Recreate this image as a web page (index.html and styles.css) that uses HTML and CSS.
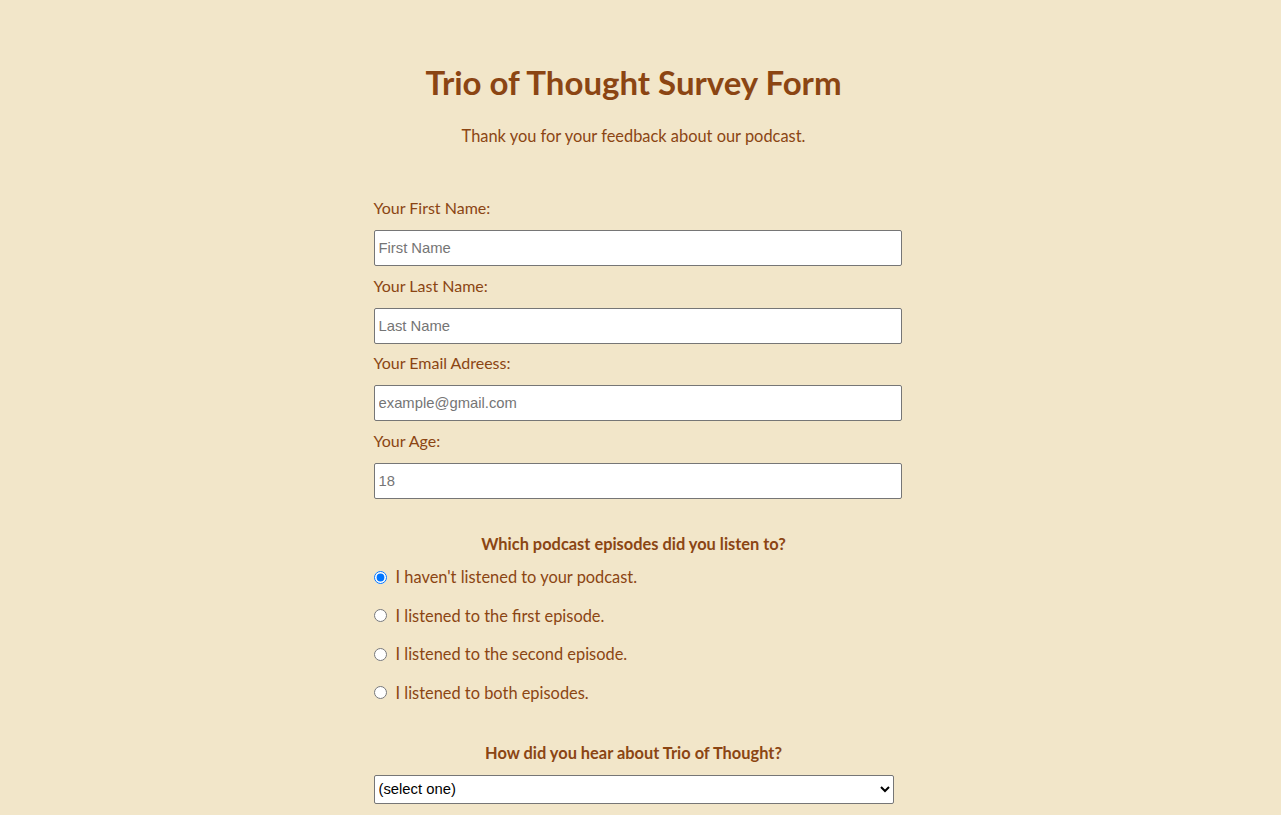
FILE: index.html
```
<!DOCTYPE html>
<html lang="en">
<head>
<meta charset="utf-8">
<title>Trio of Thought Survey Form</title>
<link rel="stylesheet" href="styles.css">
</head>
<body>
<header class="header">
  <h1 class="title" id="title">Trio of Thought Survey Form</h1>
  <p class="description" id="description">Thank you for your feedback about our podcast.</p>
</header>
<form class="survey" id="survey-form">
  <div class="field">
    <label class="label" for="first-name">Your First Name:</label>
    <input class="text-input" id="first-name" type="text" placeholder="First Name">
  </div>
  <div class="field">
    <label class="label" for="last-name">Your Last Name:</label>
    <input class="text-input" id="last-name" type="text" placeholder="Last Name">
  </div>
  <div class="field">
    <label class="label" for="email">Your Email Adreess:</label>
    <input class="text-input" id="email" type="email" placeholder="example@gmail.com">
  </div>
  <div class="field">
    <label class="label" for="age">Your Age:</label>
    <input class="text-input" id="age" type="number" placeholder="18">
  </div>

  <div class="group" role="radiogroup" aria-labelledby="episodes-q">
    <p class="question" id="episodes-q">Which podcast episodes did you listen to?</p>
    <label class="radio-row"><input class="radio" type="radio" name="episodes" checked> I haven't listened to your podcast.</label>
    <label class="radio-row"><input class="radio" type="radio" name="episodes"> I listened to the first episode.</label>
    <label class="radio-row"><input class="radio" type="radio" name="episodes"> I listened to the second episode.</label>
    <label class="radio-row"><input class="radio" type="radio" name="episodes"> I listened to both episodes.</label>
  </div>

  <div class="select-group">
    <label class="question" for="source">How did you hear about Trio of Thought?</label>
    <select class="dropdown" id="source">
      <option>(select one)</option>
      <option>Friend</option>
      <option>Social media</option>
      <option>Other</option>
    </select>
  </div>
</form>
</body>
</html>
```
FILE: styles.css
```
html, body {
  margin: 0;
  padding: 0;
}
body {
  background: #f2e6c9;
  color: #8b4513;
  font-family: Lato, "Open Sans", sans-serif;
  padding: 60px 14px 40px 0;
}
.header {
  text-align: center;
}
.title {
  margin: 0;
  font-size: 33px;
  line-height: 44px;
  font-weight: 700;
  color: #8b4513;
}
.description {
  margin: 22px 0 0;
  font-size: 16.4px;
  line-height: 20px;
}
.survey {
  width: 520px;
  margin: 52px auto 0;
  display: flex;
  flex-direction: column;
}
.field {
  display: flex;
  flex-direction: column;
  gap: 12px;
  margin-bottom: 9.6px;
}
.label {
  font-size: 16px;
  line-height: 20px;
}
.text-input {
  box-sizing: border-box;
  width: 528px;
  height: 36px;
  margin: 0;
  padding: 0 3px 0 4px;
  border: 1px solid #767676;
  border-radius: 2px;
  background: #fff;
  font-family: "Liberation Sans", Arial, sans-serif;
  font-size: 14.8px;
  color: #000;
}
.text-input::placeholder {
  color: #757575;
}
.text-input::-webkit-outer-spin-button,
.text-input::-webkit-inner-spin-button {
  -webkit-appearance: none;
  margin: 0;
}
.group {
  margin-top: 25.6px;
  display: flex;
  flex-direction: column;
  gap: 18.5px;
}
.question {
  display: block;
  margin: 0;
  text-align: center;
  font-weight: 700;
  font-size: 16.4px;
  line-height: 20px;
}
.group .question {
  margin-bottom: -5px;
}
.radio-row {
  display: flex;
  align-items: center;
  font-size: 16.4px;
  line-height: 20px;
}
.radio {
  width: 13px;
  height: 13px;
  margin: 0 9px 0 0;
}
.select-group {
  margin-top: 40px;
  display: flex;
  flex-direction: column;
  gap: 12px;
}
.dropdown {
  box-sizing: border-box;
  width: 520px;
  height: 29px;
  margin: 0;
  padding: 0;
  border: 1px solid #767676;
  border-radius: 2px;
  background: #fff;
  font-family: "Liberation Sans", Arial, sans-serif;
  font-size: 14.8px;
  color: #000;
}
```
